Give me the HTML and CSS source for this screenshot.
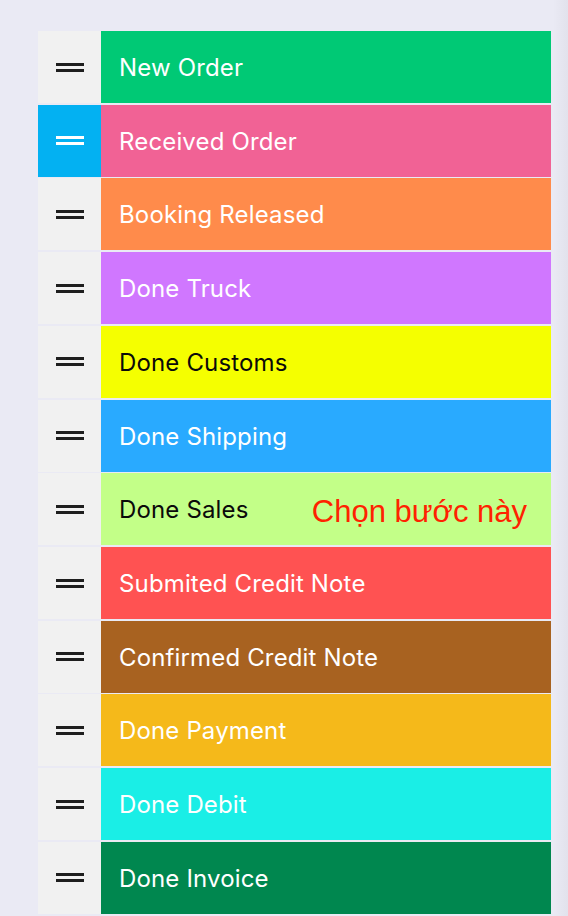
FILE: index.html
```html
<!DOCTYPE html>
<html>
<head>
<meta charset="utf-8">
<link rel="stylesheet" href="styles.css">
</head>
<body>
<ul class="steps">
  <li class="step"><span class="handle"><i></i><i></i></span><span class="label c1">New Order</span></li>
  <li class="step"><span class="handle active"><i></i><i></i></span><span class="label c2">Received Order</span></li>
  <li class="step"><span class="handle"><i></i><i></i></span><span class="label c3">Booking Released</span></li>
  <li class="step"><span class="handle"><i></i><i></i></span><span class="label c4">Done Truck</span></li>
  <li class="step"><span class="handle"><i></i><i></i></span><span class="label c5 dark">Done Customs</span></li>
  <li class="step"><span class="handle"><i></i><i></i></span><span class="label c6">Done Shipping</span></li>
  <li class="step"><span class="handle"><i></i><i></i></span><span class="label c7 dark">Done Sales<span class="hint">Chọn bước này</span></span></li>
  <li class="step"><span class="handle"><i></i><i></i></span><span class="label c8">Submited Credit Note</span></li>
  <li class="step"><span class="handle"><i></i><i></i></span><span class="label c9">Confirmed Credit Note</span></li>
  <li class="step"><span class="handle"><i></i><i></i></span><span class="label c10">Done Payment</span></li>
  <li class="step"><span class="handle"><i></i><i></i></span><span class="label c11">Done Debit</span></li>
  <li class="step"><span class="handle"><i></i><i></i></span><span class="label c12">Done Invoice</span></li>
</ul>
</body>
</html>
```

FILE: styles.css
```css
html, body {
  margin: 0;
  padding: 0;
}
body {
  width: 568px;
  height: 916px;
  overflow: hidden;
  background: linear-gradient(to right, #eaeaf4 0, #eaeaf4 553px, #e2e2ec 568px);
  font-family: Inter, "Noto Sans", sans-serif;
}
.steps {
  list-style: none;
  margin: 0;
  padding: 31px 0 0 38px;
  width: 513px;
  display: flex;
  flex-direction: column;
  gap: 1.73px;
}
.step {
  display: flex;
  height: 72px;
}
.handle {
  width: 63px;
  flex: none;
  background: #f1f1f1;
  display: flex;
  flex-direction: column;
  align-items: center;
  justify-content: center;
  gap: 3px;
}
.handle i {
  display: block;
  width: 28px;
  height: 3px;
  background: #1e1e1e;
}
.handle.active {
  background: #03b1f2;
}
.handle.active i {
  background: #ffffff;
}
.label {
  flex: 1;
  display: flex;
  align-items: center;
  justify-content: space-between;
  padding: 1px 24px 0 18px;
  font-size: 24px;
  font-weight: 400;
  color: #ffffff;
  letter-spacing: 0.15px;
}
.label.dark {
  color: #0a0a0a;
}
.hint {
  font-family: "Liberation Sans", Arial, sans-serif;
  font-size: 31px;
  color: #ff2200;
  letter-spacing: 0;
  margin-top: 4px;
}
.c1 { background: #00c975; }
.c2 { background: #f16295; }
.c3 { background: #ff8b4b; }
.c4 { background: #d077ff; }
.c5 { background: #f5ff00; }
.c6 { background: #29aaff; }
.c7 { background: #c3ff88; }
.c8 { background: #ff5252; }
.c9 { background: #a86220; }
.c10 { background: #f5b91a; }
.c11 { background: #1aeee6; }
.c12 { background: #00874f; }
```
